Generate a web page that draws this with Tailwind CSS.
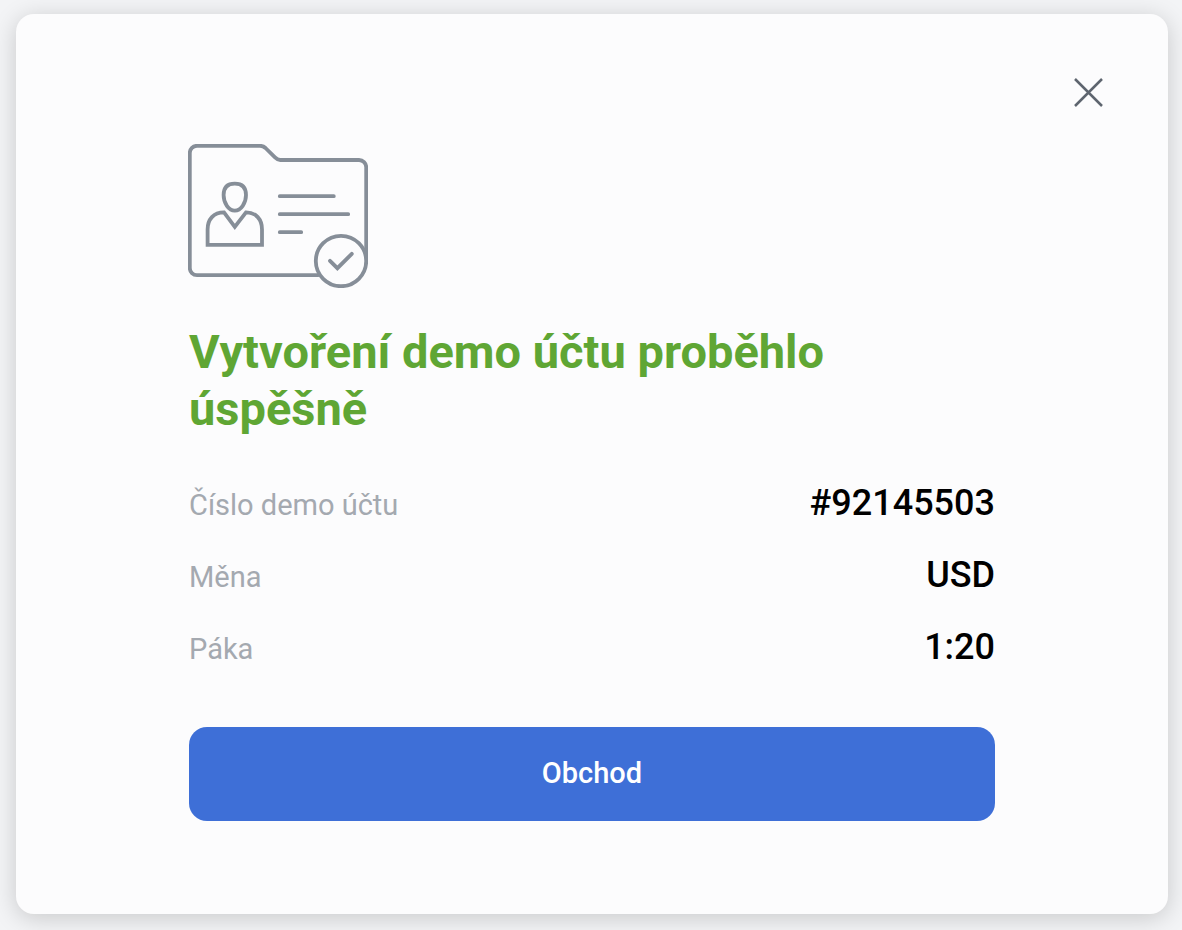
<!doctype html>
<html lang="cs">

<head>
  <meta charset="UTF-8" />
  <meta name="viewport" content="width=device-width, initial-scale=1.0" />
  <title>Demo účet</title>
  <script src="https://cdn.jsdelivr.net/npm/@tailwindcss/browser@4"></script>
</head>

<body class="bg-[#f3f4f6] font-[Roboto,sans-serif] antialiased">
  <div class="pt-[14px] pr-[14px] pb-4 pl-4">
    <main role="dialog" aria-labelledby="dialog-title"
      class="rounded-[18px] bg-[#fcfcfd] pb-[93px] shadow-[0_4px_24px_rgba(0,0,0,0.18)]">
      <!-- close -->
      <div class="flex justify-end pt-16 pr-16">
        <button type="button" aria-label="Zavřít" class="text-[#5e656f]">
          <svg class="block size-[30px]" viewBox="0 0 30 30" fill="none" stroke="currentColor" stroke-width="2.5">
            <path d="M1 1l27 27M28 1L1 28" />
          </svg>
        </button>
      </div>

      <div class="px-[173px] pt-9">
        <!-- account folder icon -->
        <svg class="-ml-px block h-36 w-[180px]" viewBox="0 0 180 144" fill="none" stroke="#868e98" stroke-width="3.8"
          stroke-linecap="round" stroke-linejoin="round" aria-hidden="true">
          <path
            d="M130 131.2H9a7.2 7.2 0 0 1-7.2-7.2V9A7.2 7.2 0 0 1 9 1.8h63c2 0 4 .8 5.5 2.2L87 13.4c1.6 1.6 3 2.6 5.2 2.6H171a7.2 7.2 0 0 1 7.2 7.2V117" />
          <path d="M46.8 39.6c7.8 0 11.2 4.2 11.2 11.4 0 8-5 15.6-11.2 15.6S35.6 59 35.6 51c0-7.2 3.4-11.4 11.2-11.4z" />
          <path stroke-linejoin="miter"
            d="M36 68.4L46.8 82.8 58 68.4c10 0 16 7 16 17V100.8H19.6V85.4c0-10 6-17 16.4-17z" />
          <path d="M91.8 52.2h54M91.8 70.2h68.4M91.8 88.2h21.4" />
          <circle cx="153" cy="117" r="25.2" fill="#fcfcfd" />
          <path stroke-linejoin="miter" d="M142 116.8l7.4 7.4 14.4-14.4" />
        </svg>

        <h1 id="dialog-title" class="mt-[35px] max-w-[700px] text-[47px] leading-[57px] font-bold text-[#5fa634]">
          Vytvoření demo účtu proběhlo úspěšně
        </h1>

        <dl class="mt-[46px] flex flex-col gap-8 leading-10">
          <div class="flex h-10 items-baseline justify-between">
            <dt class="text-[29px] text-[#a4a9b0]">Číslo demo účtu</dt>
            <dd class="text-[36px] font-medium text-black">#92145503</dd>
          </div>
          <div class="flex h-10 items-baseline justify-between">
            <dt class="text-[29px] text-[#a4a9b0]">Měna</dt>
            <dd class="text-[36px] font-medium text-black">USD</dd>
          </div>
          <div class="flex h-10 items-baseline justify-between">
            <dt class="text-[29px] text-[#a4a9b0]">Páka</dt>
            <dd class="text-[36px] font-medium text-black">1:20</dd>
          </div>
        </dl>

        <button type="button"
          class="mt-[60px] w-full rounded-[18px] bg-[#3e6fd7] pt-[26px] pb-7 text-[29px] leading-10 font-medium text-white">
          Obchod
        </button>
      </div>
    </main>
  </div>
</body>

</html>
